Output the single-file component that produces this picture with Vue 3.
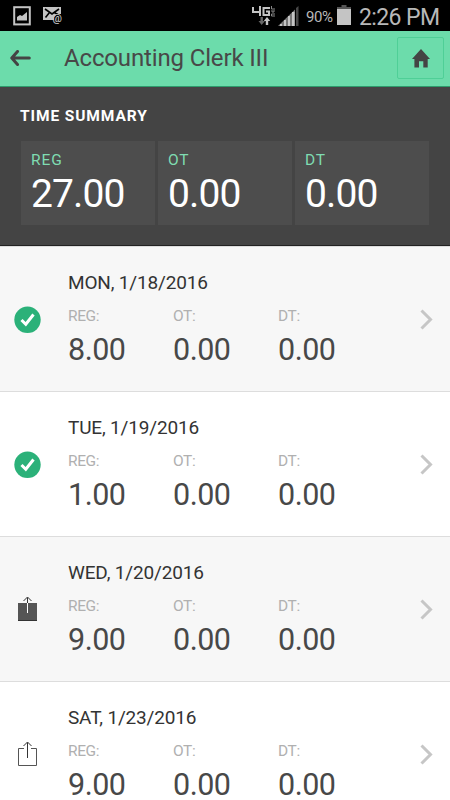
<template>
    <div class="screen">
        <div class="status-bar">
            <svg class="status-icon" width="18" height="20" viewBox="0 0 18 20">
                <rect x="1.2" y="1.2" width="15.6" height="17.2" fill="none" stroke="#c4c4c4" stroke-width="2" />
                <path d="M4 14.500V11l3-2 2 1 5-4v8.500z" fill="#c4c4c4" />
            </svg>
            <svg class="mail-icon" width="21" height="20" viewBox="0 0 21 20">
                <path d="M0 1h18v7h-4l-3 3v3H0z" fill="#c4c4c4" />
                <path d="M2 3l7 5 7-5M2.500 11.500l4-5M11 6.500l4 2" fill="none" stroke="#000" stroke-width="1.600" />
                <text x="9.500" y="15.500" font-size="10.500" font-weight="500" fill="#c4c4c4">@</text>
            </svg>
            <svg class="network-icon" width="24" height="20" viewBox="0 0 24 20">
                <path d="M1 1v5h8M8 0v10M18 2h-6.500v7H17V5.500h-3" fill="none" stroke="#c4c4c4" stroke-width="2" />
                <path d="M19.500 0v3h3.500M19 5h4M21 5v2M23 8h-3.500v2H23" fill="none" stroke="#888" stroke-width="1" />
                <path d="M8.500 11h2.400v4h2l-3.200 4-3.200-4h2z" fill="#666" />
                <path d="M13.800 19h2.400v-4h2L15 11l-3.200 4h2z" fill="#c4c4c4" />
            </svg>
            <svg class="signal-icon" width="21" height="21" viewBox="0 0 21 21">
                <path d="M0 20L17 3.500V20z" fill="#777" />
                <path d="M2 18h2v2H2zM6 14h2v6H6zM10 10h2v10h-2zM14 6h2.500v14H14z" fill="#c4c4c4" />
                <path d="M18 2l2.500-2v20H18z" fill="#484848" />
            </svg>
            <span class="battery-level">90%</span>
            <svg class="battery-icon" width="14" height="20" viewBox="0 0 14 20">
                <rect x="4.500" width="5" height="3" fill="#555" />
                <rect y="2" width="14" height="2" fill="#555" />
                <rect y="4" width="14" height="16" fill="#c4c4c4" />
            </svg>
            <span class="clock">2:26 PM</span>
        </div>

        <header class="header">
            <svg class="back" width="21" height="16" viewBox="0 0 21 16">
                <path d="M7.500 1.500L1.800 8l5.700 6.500M2.500 8h16.800" fill="none" stroke="#444" stroke-width="3" stroke-linecap="round" stroke-linejoin="round" />
            </svg>
            <h1 class="title">Accounting Clerk III</h1>
            <button class="home" aria-label="Home">
                <svg width="18" height="19" viewBox="0 0 18 19">
                    <path d="M9 0l9 10h-2.300v8.500h-4.400v-6.200H7v6.200H2.400V10H0z" fill="#444" />
                </svg>
            </button>
        </header>

        <section class="summary">
            <h2 class="summary-title">TIME SUMMARY</h2>
            <div class="totals">
                <div v-for="total in totals" :key="total.label" class="total">
                    <span class="total-label">{{ total.label }}</span>
                    <span class="total-value">{{ total.value }}</span>
                </div>
            </div>
        </section>

        <ul class="days">
            <li v-for="day in days" :key="day.date" class="day">
                <div class="day-status">
                    <svg v-if="day.status === 'approved'" width="27" height="27" viewBox="0 0 27 27">
                        <circle cx="13.500" cy="13.800" r="13.200" fill="#2bb179" />
                        <path d="M7.500 14l4.300 4.300 7.700-9.800" fill="none" stroke="#fff" stroke-width="3" />
                    </svg>
                    <svg v-else class="export-icon" width="19" height="25" viewBox="0 0 19 25">
                        <template v-if="day.status === 'submitted'">
                            <path d="M0 7h19v18H0z" fill="#555" />
                            <path d="M0 24.500h19" stroke="#333" />
                            <path d="M9.500 7v10" stroke="#fff" />
                            <path d="M9.500 7V1.500M5.500 5l4-4 4 4" fill="none" stroke="#333" />
                        </template>
                        <template v-else>
                            <path d="M6 7.500H.5v17h18v-17H13" fill="none" stroke="#555" />
                            <path d="M9.500 17V1.500M5.500 5l4-4 4 4" fill="none" stroke="#333" />
                        </template>
                    </svg>
                </div>
                <div class="day-body">
                    <div class="date">{{ day.date }}</div>
                    <div class="hours">
                        <div v-for="(label, i) in labels" :key="label" class="hour">
                            <span class="hour-label">{{ label }}:</span>
                            <span class="hour-value">{{ day.hours[i] }}</span>
                        </div>
                    </div>
                </div>
                <svg class="chevron" width="13" height="21" viewBox="0 0 13 21">
                    <path d="M1.500 1.500l9 9-9 9" fill="none" stroke="#c6c6c6" stroke-width="3" />
                </svg>
            </li>
        </ul>
    </div>
</template>

<script setup>
const labels = ['REG', 'OT', 'DT'];

const totals = [
    { label: 'REG', value: '27.00' },
    { label: 'OT', value: '0.00' },
    { label: 'DT', value: '0.00' }
];

const days = [
    { date: 'MON, 1/18/2016', status: 'approved', hours: ['8.00', '0.00', '0.00'] },
    { date: 'TUE, 1/19/2016', status: 'approved', hours: ['1.00', '0.00', '0.00'] },
    { date: 'WED, 1/20/2016', status: 'submitted', hours: ['9.00', '0.00', '0.00'] },
    { date: 'SAT, 1/23/2016', status: 'open', hours: ['9.00', '0.00', '0.00'] }
];
</script>

<style>
body {
    margin: 0;
    overflow: hidden;
}
</style>

<style scoped>
.screen {
    width: 450px;
    height: 800px;
    overflow: hidden;
    background: #fff;
    font-family: Roboto, "Liberation Sans", sans-serif;
    font-weight: 400;
    color: #484848;
}

.screen svg {
    display: block;
    flex: none;
}

.status-bar {
    display: flex;
    align-items: flex-start;
    box-sizing: border-box;
    height: 31px;
    padding: 6px 0 0 13px;
    background: #000;
    color: #b8b8b8;
}

.mail-icon {
    margin-left: 12px;
}

.network-icon {
    margin-left: 188px;
}

.signal-icon {
    margin-left: 2px;
}

.battery-level {
    width: 31px;
    margin-top: 1px;
    font-size: 15px;
    line-height: 20px;
    letter-spacing: -0.4px;
    margin-left: 7px;
}

.battery-icon {
    margin-top: -1px;
}

.clock {
    margin-left: 8px;
    font-size: 23px;
    line-height: 23px;
    letter-spacing: -0.6px;
    white-space: nowrap;
}

.header {
    display: flex;
    align-items: center;
    box-sizing: border-box;
    height: 56px;
    padding: 0 6px 1px 10px;
    border-bottom: 1px solid #2d9c6c;
    background: #6cdcab;
}

.title {
    flex: 1;
    margin: 0 0 0 33px;
    font-size: 24px;
    font-weight: 400;
    line-height: 30px;
    letter-spacing: -0.15px;
}

.home {
    display: flex;
    align-items: center;
    justify-content: center;
    width: 47px;
    height: 42px;
    padding: 0;
    border: 1px solid #4fcf97;
    border-radius: 2px;
    background: none;
}

.summary {
    box-sizing: border-box;
    height: 159px;
    padding: 19px 21px 0;
    border-bottom: 1px solid #222;
    background: #444;
}

.summary-title {
    margin: 0 0 15px -1px;
    color: #fff;
    font-size: 15.5px;
    font-weight: 700;
    line-height: 20px;
    letter-spacing: 0.9px;
}

.totals {
    display: grid;
    grid-template-columns: repeat(3, 1fr);
    gap: 3px;
}

.total {
    display: flex;
    flex-direction: column;
    box-sizing: border-box;
    height: 84px;
    padding: 9px 10px 0;
    background: #4d4d4d;
}

.total-label {
    color: #7fdcb2;
    font-size: 15.5px;
    line-height: 20px;
    letter-spacing: 0.9px;
}

.total-value {
    color: #fff;
    font-size: 39px;
    line-height: 48px;
    letter-spacing: -0.9px;
}

.days {
    margin: 0;
    padding: 0;
    border-top: 1px solid #ddd;
    list-style: none;
}

.day {
    display: flex;
    align-items: center;
    box-sizing: border-box;
    height: 145px;
    padding-right: 17px;
    border-bottom: 1px solid #ddd;
    background: #fff;
}

.day:nth-child(odd) {
    background: #f7f7f7;
}

.day-status {
    display: flex;
    justify-content: center;
    width: 55px;
    margin-right: 13px;
}

.export-icon {
    margin-bottom: 2px;
}

.day-body {
    flex: 1;
}

.date {
    color: #333;
    font-size: 19px;
    line-height: 24px;
    letter-spacing: -0.17px;
}

.hours {
    display: flex;
    margin-top: 11px;
}

.hour {
    display: flex;
    flex-direction: column;
    width: 105px;
}

.hour-label {
    color: #b0b0b0;
    font-size: 15.5px;
    line-height: 20px;
    letter-spacing: -0.4px;
}

.hour-value {
    margin-top: 6px;
    font-size: 30.5px;
    line-height: 36px;
    letter-spacing: -0.5px;
}
</style>
